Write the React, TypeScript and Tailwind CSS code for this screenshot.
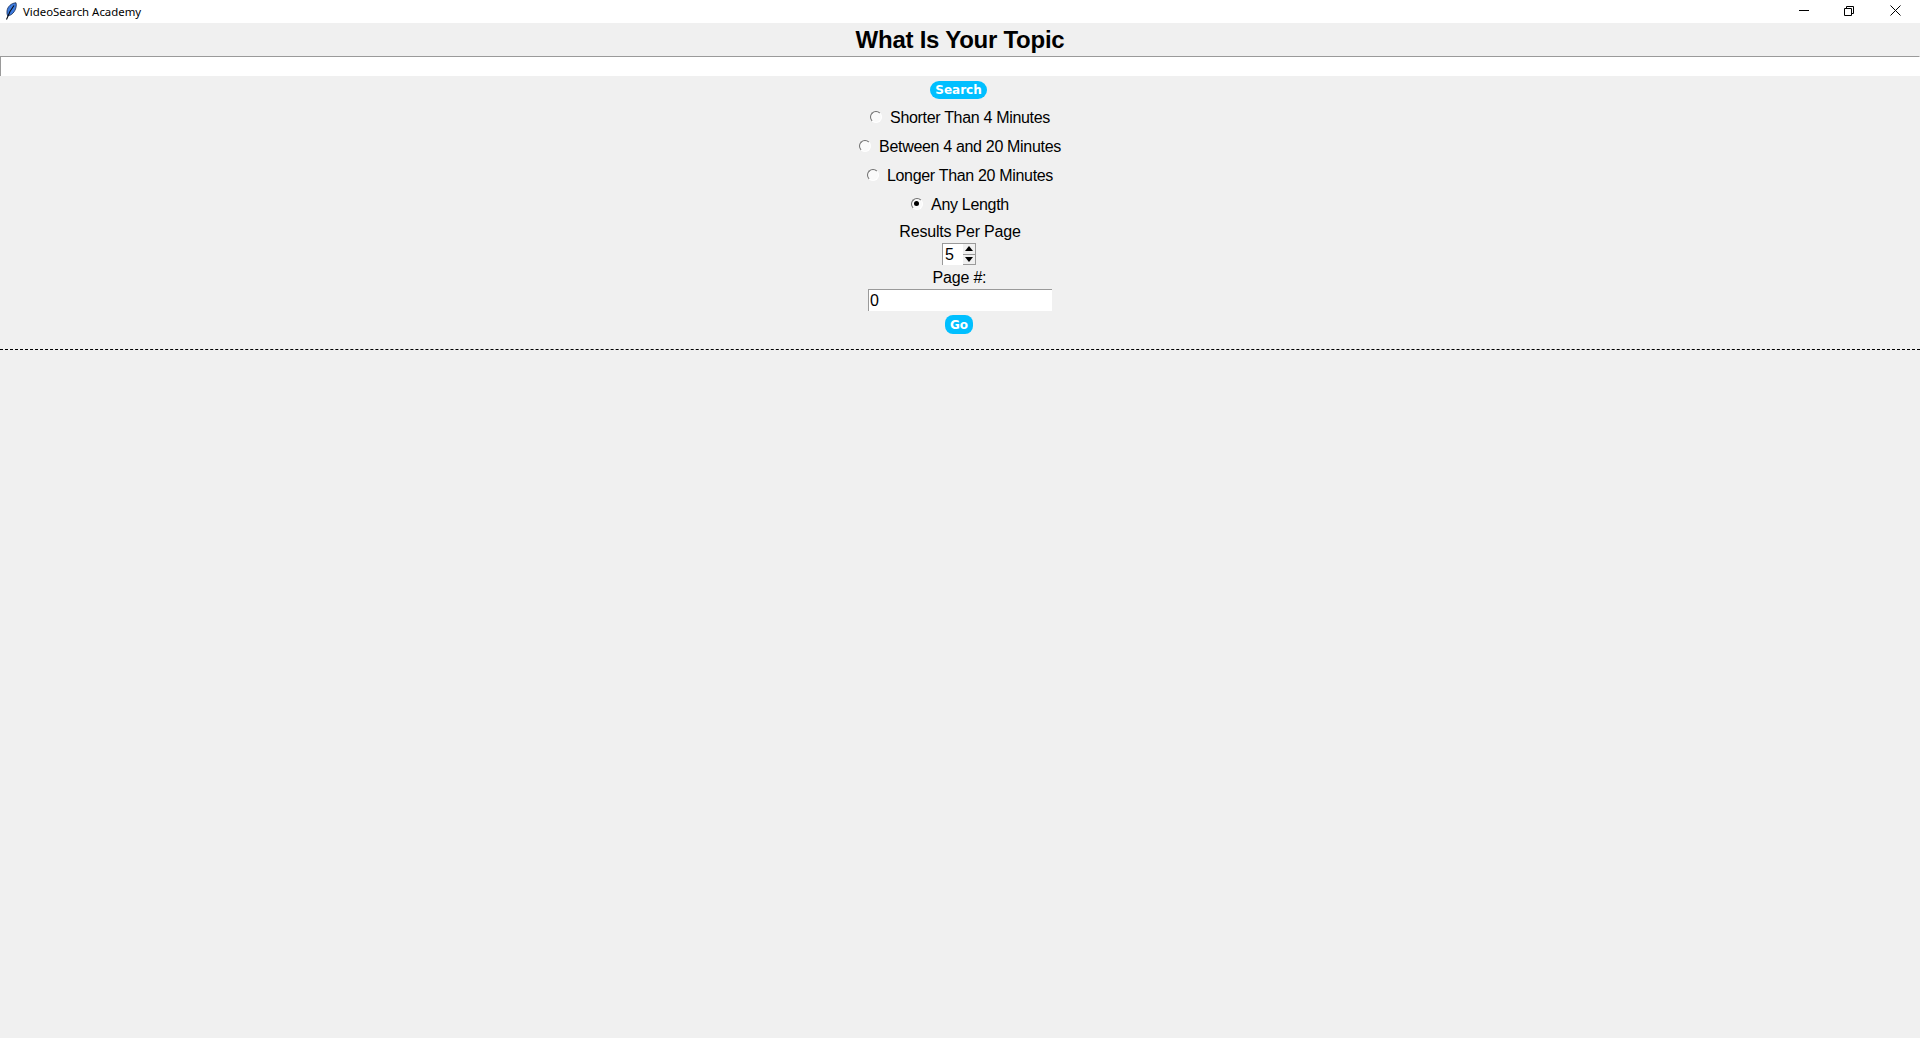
import { useState } from 'react';

const LENGTHS = [
  'Shorter Than 4 Minutes',
  'Between 4 and 20 Minutes',
  'Longer Than 20 Minutes',
  'Any Length',
];

function Feather() {
  return (
    <svg width="12" height="18" viewBox="0 0 12 18" className="ml-[5px] shrink-0 mb-[1px]">
      <path d="M11 .8C6.5 1 2.5 4.5 2 9c-.2 2 0 3.6.6 4.8C7 13.5 10 9.5 11 5.5c.4-1.800.4-3.400 0-4.700z" fill="#3d7ce0" stroke="#16294f" strokeWidth=".8" />
      <path d="M9 3.500 5 9.500 1.500 17.500" fill="none" stroke="#050a14" strokeWidth="1.100" />
    </svg>
  );
}

function Radio({ checked }: { checked: boolean }) {
  return (
    <span className="relative block w-[12px] h-[12px] rounded-full bg-[#fafafa] border-[1.5px] border-t-[#6e6e6e] border-l-[#6e6e6e] border-r-white border-b-white">
      {checked && <span className="absolute left-[2px] top-[2px] w-[5px] h-[5px] rounded-full bg-black" />}
    </span>
  );
}

function PillButton({ label, className }: { label: string; className: string }) {
  return (
    <button className={`flex items-center justify-center bg-[#00bfff] text-white font-bold font-['DejaVu_Sans',sans-serif] text-[12px] leading-none ${className}`}>
      {label}
    </button>
  );
}

export default function App() {
  const [length, setLength] = useState('Any Length');

  return (
    <div className="h-[1038px] flex flex-col bg-[#f0f0f0] text-black font-['Liberation_Sans',Arial,sans-serif] overflow-hidden">
      {/* Title bar */}
      <div className="h-[23px] bg-white flex items-center shrink-0">
        <Feather />
        <span className="ml-[6px] mt-[1px] text-[11.4px] leading-none font-['Noto_Sans','Open_Sans',sans-serif] text-black">
          VideoSearch Academy
        </span>
        <div className="ml-auto flex items-center pr-[19px] mb-[3px] gap-[35px] text-black">
          <svg width="11" height="11" viewBox="0 0 11 11"><path d="M1 5.5h10" stroke="#000" fill="none" /></svg>
          <svg width="11" height="11" viewBox="0 0 11 11" fill="none" stroke="#000">
            <path d="M.5 3.5h7v7h-7zM2.5 3.5v-2h7v7h-2" />
          </svg>
          <svg width="11" height="11" viewBox="0 0 11 11" fill="none" stroke="#000"><path d="M.5.5l10 10M10.5.5l-10 10" /></svg>
        </div>
      </div>

      <h1 className="h-[33px] text-center text-[24px] leading-[33px] font-bold tracking-[-0.25px] shrink-0">What Is Your Topic</h1>

      <div className="h-[20px] bg-white border-t border-l border-[#9a9a9a] border-r-white shrink-0 border-r" />

      <div className="flex flex-col items-center">
        <PillButton label="Search" className="mt-[5px] mr-[3px] w-[57px] h-[18px] rounded-full" />

        <div className="mt-[4px] flex flex-col items-center">
          {LENGTHS.map((l) => (
            <label key={l} onClick={() => setLength(l)} className="h-[29px] flex items-center gap-[8px] text-[16px] leading-none tracking-[-0.32px]">
              <span className="-mt-[2px]"><Radio checked={length === l} /></span>
              <span>{l}</span>
            </label>
          ))}
        </div>

        <div className="mt-[2px] h-[22px] text-[16px] leading-[22px] tracking-[-0.2px]">Results Per Page</div>

        <div className="mr-[2px] w-[34px] h-[22px] bg-white border-t border-l border-[#9a9a9a] flex">
          <span className="pl-[2px] text-[16px] leading-[21px]">5</span>
          <div className="ml-auto w-[13px] flex flex-col border-r border-b border-[#9a9a9a] bg-[#f0f0f0]">
            <span className="flex-1 flex items-center justify-center border-b border-[#9a9a9a]">
              <span className="w-0 h-0 border-x-[4.5px] border-x-transparent border-b-[5px] border-b-black" />
            </span>
            <span className="flex-1 flex items-center justify-center">
              <span className="w-0 h-0 border-x-[4.5px] border-x-transparent border-t-[5px] border-t-black" />
            </span>
          </div>
        </div>

        <div className="mt-[2px] mr-[1px] h-[22px] text-[16px] leading-[22px] tracking-[-0.2px]">Page #:</div>

        <div className="w-[184px] h-[22px] bg-white border-t border-l border-[#9a9a9a] pl-[1px] text-[16px] leading-[21px]">0</div>

        <PillButton label="Go" className="mt-[4px] mr-[2px] w-[28px] h-[19px] rounded-[8px]" />
      </div>

      <div className="mt-[15px] border-t border-dashed border-black shrink-0" />
    </div>
  );
}
